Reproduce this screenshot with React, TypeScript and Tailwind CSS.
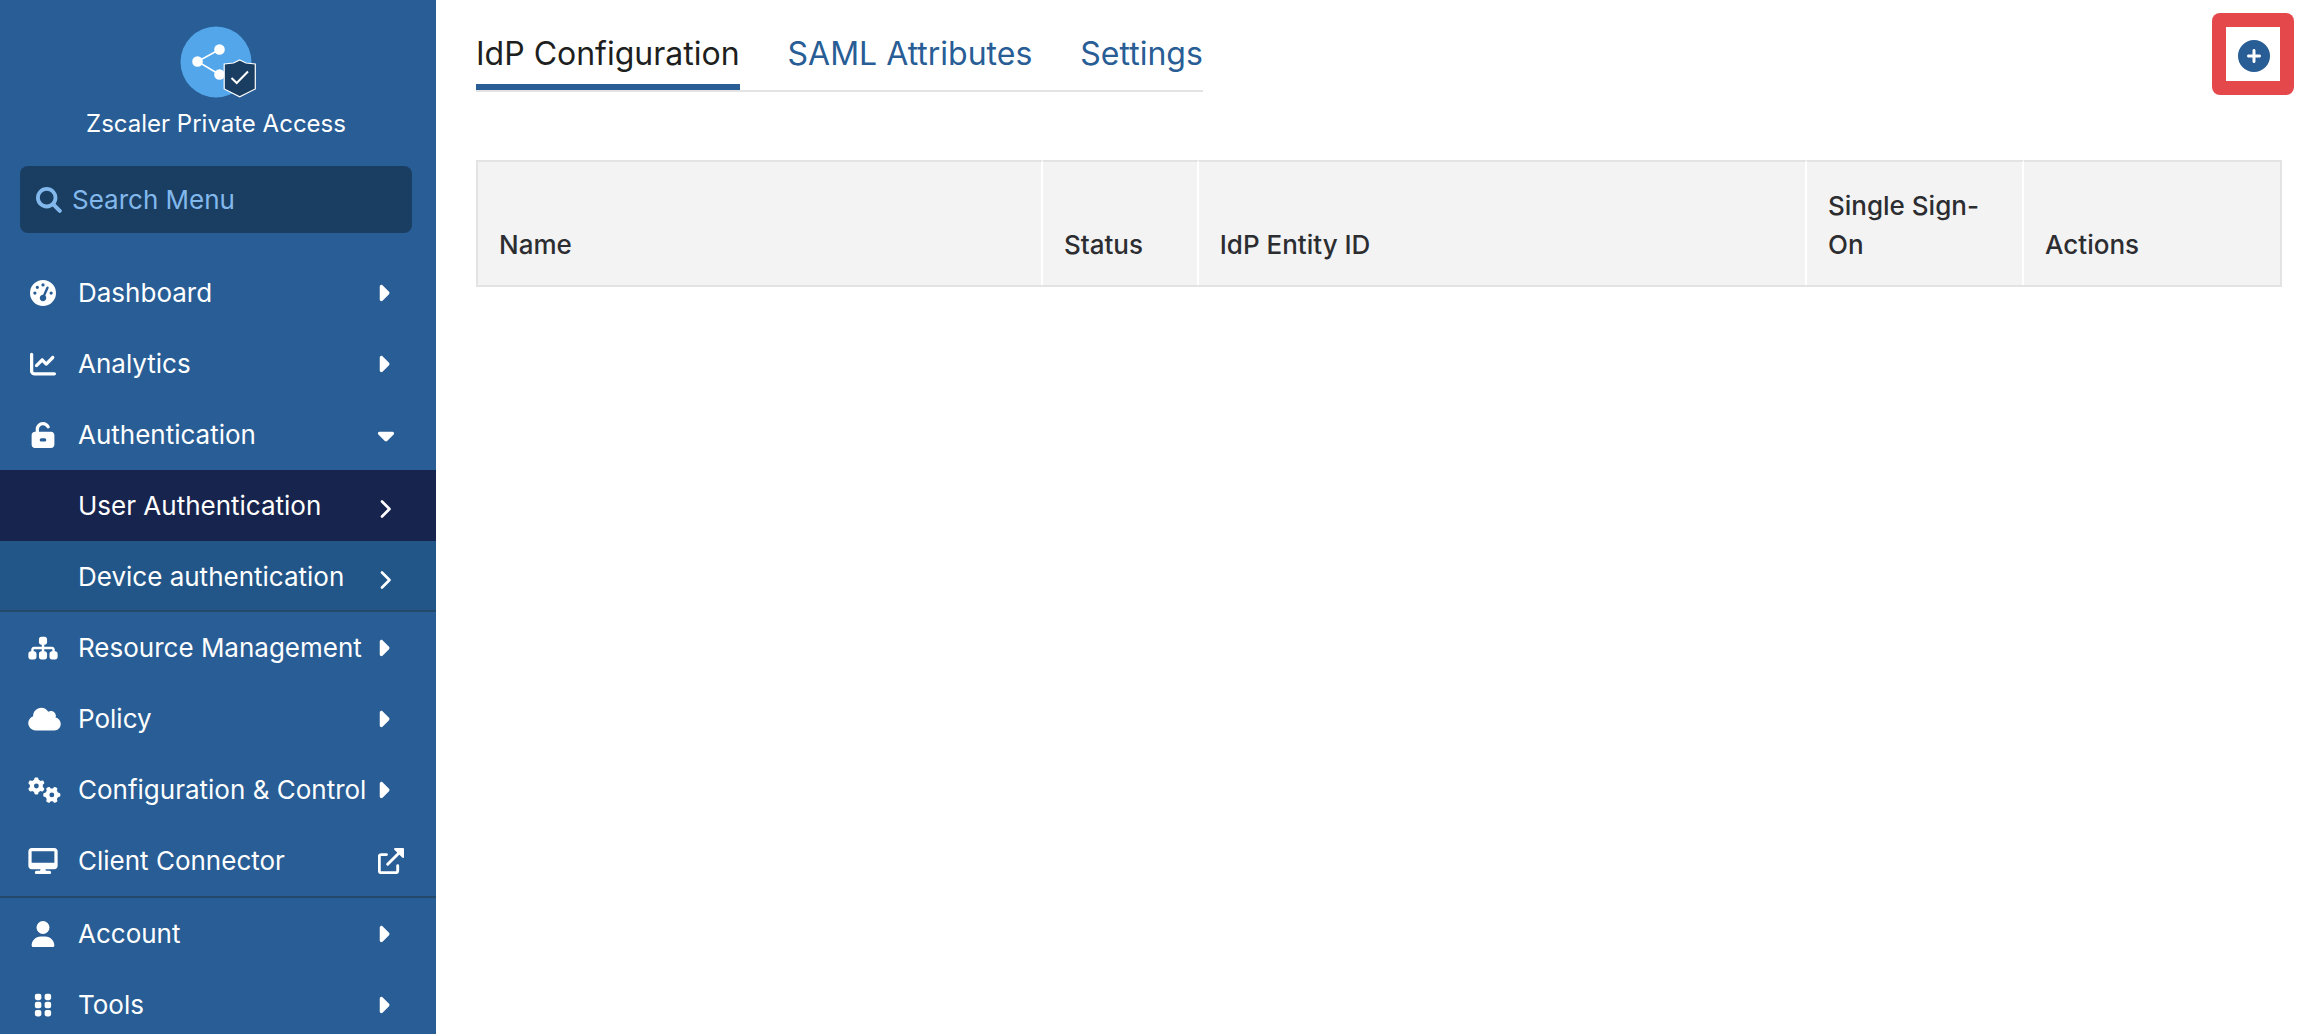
import type { ReactNode } from 'react'
import {
  FaCaretDown,
  FaCaretRight,
  FaChartLine,
  FaCirclePlus,
  FaCloud,
  FaDesktop,
  FaGaugeHigh,
  FaGears,
  FaGripVertical,
  FaSitemap,
  FaUser
} from 'react-icons/fa6'

interface NavItem {
  label: string
  icon: ReactNode
  expanded?: boolean
  external?: boolean
  children?: { label: string; active?: boolean }[]
}

const mainNav: NavItem[] = [
  { label: 'Dashboard', icon: <FaGaugeHigh className="size-[26px]" /> },
  { label: 'Analytics', icon: <FaChartLine className="size-[26px]" /> },
  {
    label: 'Authentication',
    icon: <UnlockIcon />,
    expanded: true,
    children: [{ label: 'User Authentication', active: true }, { label: 'Device authentication' }]
  },
  { label: 'Resource Management', icon: <FaSitemap className="h-[26px] w-[30px]" /> },
  { label: 'Policy', icon: <FaCloud className="h-[26px] w-[33px]" /> },
  { label: 'Configuration & Control', icon: <FaGears className="h-[26px] w-[33px]" /> },
  { label: 'Client Connector', icon: <FaDesktop className="h-[26px] w-[30px]" />, external: true }
]

const accountNav: NavItem[] = [
  { label: 'Account', icon: <FaUser className="size-[26px]" /> },
  { label: 'Tools', icon: <FaGripVertical className="size-[26px]" /> }
]

const tabs = ['IdP Configuration', 'SAML Attributes', 'Settings']

const columns = [
  { label: 'Name', width: 'w-[31.35%]' },
  { label: 'Status', width: 'w-[8.65%]' },
  { label: 'IdP Entity ID', width: 'w-[33.75%]' },
  { label: 'Single Sign-On', width: 'w-[12.05%]' },
  { label: 'Actions', width: 'w-[14.2%]' }
]

function UnlockIcon() {
  return (
    <svg viewBox="0 0 448 512" className="size-[26px]" fill="currentColor" aria-hidden="true">
      <path
        fillRule="evenodd"
        d="M224 0c-79.500 0-144 64.500-144 144v48H64c-35.300 0-64 28.700-64 64v192c0 35.300 28.700 64 64 64h320c35.300 0 64-28.700 64-64V256c0-35.300-28.700-64-64-64H144v-48c0-44.200 35.800-80 80-80 32 0 59.600 18.800 72.400 46 7.500 16 26.600 22.900 42.600 15.300s22.800-26.600 15.300-42.600C331.200 33.900 281.600 0 224 0zM192 320h64c17.700 0 32 14.300 32 32s-14.300 32-32 32h-64c-17.700 0-32-14.300-32-32s14.300-32 32-32z"
      />
    </svg>
  )
}

function SearchIcon() {
  return (
    <svg viewBox="0 0 26 26" className="size-[26px] shrink-0" fill="none" stroke="currentColor" strokeLinecap="round" aria-hidden="true">
      <circle cx="10.700" cy="10.700" r="8.800" strokeWidth="3.800" />
      <path d="m17.300 17.300 6.500 6.500" strokeWidth="4" />
    </svg>
  )
}

function ExternalIcon() {
  return (
    <svg viewBox="0 0 26 26" className="size-[26px] shrink-0" aria-hidden="true">
      <path
        d="M8.500 6.600H3.300a2 2 0 0 0-2 2v14.100a2 2 0 0 0 2 2h14.400a2 2 0 0 0 2-2v-4.900M9.700 16.300 21 5"
        fill="none"
        stroke="currentColor"
        strokeWidth="2.900"
        strokeLinecap="round"
      />
      <path d="M17.300 0H25a1 1 0 0 1 1 1v7.700c0 1.200-1 1.700-1.800.9l-7.800-7.800C15.600 1 16.100 0 17.300 0z" fill="currentColor" />
    </svg>
  )
}

function ChevronIcon() {
  return (
    <svg viewBox="0 0 12 18" className="mt-1.5 h-[18px] w-3" fill="none" aria-hidden="true">
      <path d="m2 1.500 7.500 7.500L2 16.500" stroke="currentColor" strokeWidth="2.600" strokeLinecap="round" strokeLinejoin="round" />
    </svg>
  )
}

function Logo() {
  return (
    <svg viewBox="0 0 72 72" className="size-[72px] overflow-visible" aria-hidden="true">
      <circle cx="36" cy="36" r="35.500" fill="#54a6ea" />
      <path d="M39.500 23.500 17.500 35.500l22 13" fill="none" stroke="#fff" strokeWidth="1.500" />
      <circle cx="39.500" cy="23.500" r="5.300" fill="#fff" />
      <circle cx="17.500" cy="35.500" r="5.300" fill="#fff" />
      <circle cx="39.500" cy="48.500" r="5.300" fill="#fff" />
      <path d="M59.700 34 66 37l9.300 1v25l-15.600 7.800L44.200 63V38l9.300-1z" fill="#1a3e61" stroke="#fff" strokeWidth="1.200" />
      <path d="m51.500 52 5.200 5L68 45.500" fill="none" stroke="#fff" strokeWidth="2" />
    </svg>
  )
}

function NavRow({ item }: { item: NavItem }) {
  return (
    <li>
      <button
        className="flex h-[71px] w-full items-center pr-8 pl-7 text-left"
        aria-expanded={item.expanded}
      >
        <span className="mr-5 flex w-[30px] shrink-0 [justify-content:safe_center] [&>svg]:shrink-0">
          {item.icon}
        </span>
        <span className="flex-1 whitespace-nowrap">{item.label}</span>
        {item.external && <ExternalIcon />}
        {!item.external && (item.expanded ? <FaCaretDown className="mr-[5px]" /> : <FaCaretRight className="mr-2" />)}
      </button>
      {item.children && (
        <ul className="border-b-2 border-[#24496b] bg-[#235688]">
          {item.children.map(child => (
            <li key={child.label}>
              <a
                href="#"
                className={
                  child.active
                    ? 'flex h-[71px] items-center justify-between bg-[#17244e] pr-11 pl-[78px]'
                    : 'flex h-[69px] items-center justify-between pt-0.5 pr-11 pl-[78px]'
                }
              >
                {child.label}
                <ChevronIcon />
              </a>
            </li>
          ))}
        </ul>
      )}
    </li>
  )
}

function Sidebar() {
  return (
    <aside className="w-[436px] shrink-0 overflow-hidden bg-[#285d95] text-[26px] text-white">
      <div className="flex flex-col items-center pt-[26px] pr-1">
        <Logo />
        <p className="mt-2 text-[24px] leading-9">Zscaler Private Access</p>
      </div>
      <label className="mt-6 mr-6 ml-5 flex h-[67px] items-center gap-2.5 rounded-lg bg-[#1a3e61] px-4 text-[#82b8ec]">
        <SearchIcon />
        <input
          type="text"
          aria-label="Search Menu"
          placeholder="Search Menu"
          className="min-w-0 flex-1 bg-transparent outline-none placeholder:text-[#82b8ec]"
        />
      </label>
      <nav className="mt-6">
        <ul className="border-b-2 border-[#24496b]">
          {mainNav.map(item => <NavRow key={item.label} item={item} />)}
        </ul>
        <ul>
          {accountNav.map(item => <NavRow key={item.label} item={item} />)}
        </ul>
      </nav>
    </aside>
  )
}

export default function App() {
  return (
    <div className="flex h-screen overflow-hidden bg-white font-['Inter',sans-serif]">
      <Sidebar />
      <main className="min-w-0 flex-1 pr-[38px] pl-10">
        <header className="flex h-24 items-start justify-between">
          <div role="tablist" className="mt-[22px] flex gap-12 border-b-2 border-[#e3e3e3] text-[32px]">
            {tabs.map((tab, i) => (
              <button
                key={tab}
                role="tab"
                aria-selected={i === 0}
                className={
                  i === 0
                    ? 'h-[68px] border-b-[6px] border-[#285d95] pt-0.5 leading-10 text-[#1e1f20]'
                    : 'h-[68px] border-b-[6px] border-transparent pt-0.5 leading-10 text-[#285d95]'
                }
              >
                {tab}
              </button>
            ))}
          </div>
          <button
            aria-label="Add IdP configuration"
            className="mt-[13px] -mr-3 flex size-[82px] items-center justify-center rounded-lg bg-[#e4484b]"
          >
            <span className="flex size-[54px] items-center justify-center bg-white pt-1 pl-0.5 text-[32px] text-[#285d95]">
              <FaCirclePlus />
            </span>
          </button>
        </header>
        <table className="mt-16 w-full table-fixed border-separate border-spacing-0 border-2 border-t-0 border-[#e3e3e3] bg-[#f3f3f3] text-[26px] text-[#2c2d31]">
          <thead>
            <tr>
              {columns.map(col => (
                <th
                  key={col.label}
                  scope="col"
                  className={`${col.width} h-[125px] border-t-2 border-r-2 border-t-[#e3e3e3] border-r-white px-[21px] pb-[21px] text-left align-bottom leading-[39px] font-medium last:border-r-0`}
                >
                  {col.label}
                </th>
              ))}
            </tr>
          </thead>
        </table>
      </main>
    </div>
  )
}
